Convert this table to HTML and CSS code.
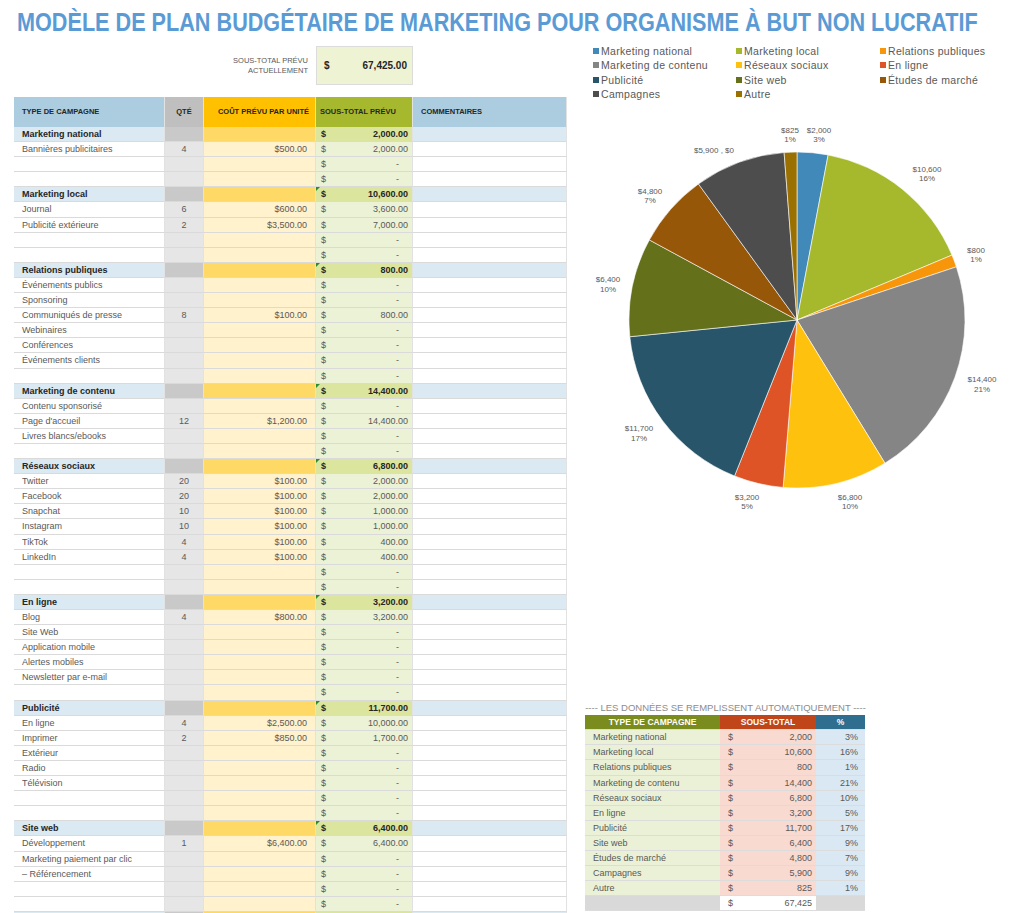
FILE: index.html
```html
<!DOCTYPE html>
<html lang="fr">
<head>
<meta charset="utf-8">
<title>Modèle de plan budgétaire de marketing</title>
<link rel="stylesheet" href="styles.css">
</head>
<body>
<h1 class="title"><span class="title-text">MODÈLE DE PLAN BUDGÉTAIRE DE MARKETING POUR ORGANISME À BUT NON LUCRATIF</span></h1>
<div class="main">
  <div class="left">
    <div class="total-block">
      <div class="total-label">SOUS-TOTAL PRÉVU<br>ACTUELLEMENT</div>
      <div class="total-box"><span>$</span><span>67,425.00</span></div>
    </div>
    <div class="budget">
      <div class="row head">
        <div class="c-type">TYPE DE CAMPAGNE</div>
        <div class="c-qty">QTÉ</div>
        <div class="c-cost">COÛT PRÉVU PAR UNITÉ</div>
        <div class="c-sub">SOUS-TOTAL PRÉVU</div>
        <div class="c-com">COMMENTAIRES</div>
      </div>

      <div class="row sec"><div class="c-type">Marketing national</div><div class="c-qty"></div><div class="c-cost"></div><div class="c-sub"><span>$</span><span>2,000.00</span></div><div class="c-com"></div></div>
      <div class="row item"><div class="c-type">Bannières publicitaires</div><div class="c-qty">4</div><div class="c-cost">$500.00</div><div class="c-sub"><span>$</span><span>2,000.00</span></div><div class="c-com"></div></div>
      <div class="row item"><div class="c-type"></div><div class="c-qty"></div><div class="c-cost"></div><div class="c-sub"><span>$</span><span class="dash">-</span></div><div class="c-com"></div></div>
      <div class="row item"><div class="c-type"></div><div class="c-qty"></div><div class="c-cost"></div><div class="c-sub"><span>$</span><span class="dash">-</span></div><div class="c-com"></div></div>

      <div class="row sec"><div class="c-type">Marketing local</div><div class="c-qty"></div><div class="c-cost"></div><div class="c-sub flag"><span>$</span><span>10,600.00</span></div><div class="c-com"></div></div>
      <div class="row item"><div class="c-type">Journal</div><div class="c-qty">6</div><div class="c-cost">$600.00</div><div class="c-sub"><span>$</span><span>3,600.00</span></div><div class="c-com"></div></div>
      <div class="row item"><div class="c-type">Publicité extérieure</div><div class="c-qty">2</div><div class="c-cost">$3,500.00</div><div class="c-sub"><span>$</span><span>7,000.00</span></div><div class="c-com"></div></div>
      <div class="row item"><div class="c-type"></div><div class="c-qty"></div><div class="c-cost"></div><div class="c-sub"><span>$</span><span class="dash">-</span></div><div class="c-com"></div></div>
      <div class="row item"><div class="c-type"></div><div class="c-qty"></div><div class="c-cost"></div><div class="c-sub"><span>$</span><span class="dash">-</span></div><div class="c-com"></div></div>

      <div class="row sec"><div class="c-type">Relations publiques</div><div class="c-qty"></div><div class="c-cost"></div><div class="c-sub flag"><span>$</span><span>800.00</span></div><div class="c-com"></div></div>
      <div class="row item"><div class="c-type">Événements publics</div><div class="c-qty"></div><div class="c-cost"></div><div class="c-sub"><span>$</span><span class="dash">-</span></div><div class="c-com"></div></div>
      <div class="row item"><div class="c-type">Sponsoring</div><div class="c-qty"></div><div class="c-cost"></div><div class="c-sub"><span>$</span><span class="dash">-</span></div><div class="c-com"></div></div>
      <div class="row item"><div class="c-type">Communiqués de presse</div><div class="c-qty">8</div><div class="c-cost">$100.00</div><div class="c-sub"><span>$</span><span>800.00</span></div><div class="c-com"></div></div>
      <div class="row item"><div class="c-type">Webinaires</div><div class="c-qty"></div><div class="c-cost"></div><div class="c-sub"><span>$</span><span class="dash">-</span></div><div class="c-com"></div></div>
      <div class="row item"><div class="c-type">Conférences</div><div class="c-qty"></div><div class="c-cost"></div><div class="c-sub"><span>$</span><span class="dash">-</span></div><div class="c-com"></div></div>
      <div class="row item"><div class="c-type">Événements clients</div><div class="c-qty"></div><div class="c-cost"></div><div class="c-sub"><span>$</span><span class="dash">-</span></div><div class="c-com"></div></div>
      <div class="row item"><div class="c-type"></div><div class="c-qty"></div><div class="c-cost"></div><div class="c-sub"><span>$</span><span class="dash">-</span></div><div class="c-com"></div></div>

      <div class="row sec"><div class="c-type">Marketing de contenu</div><div class="c-qty"></div><div class="c-cost"></div><div class="c-sub flag"><span>$</span><span>14,400.00</span></div><div class="c-com"></div></div>
      <div class="row item"><div class="c-type">Contenu sponsorisé</div><div class="c-qty"></div><div class="c-cost"></div><div class="c-sub"><span>$</span><span class="dash">-</span></div><div class="c-com"></div></div>
      <div class="row item"><div class="c-type">Page d'accueil</div><div class="c-qty">12</div><div class="c-cost">$1,200.00</div><div class="c-sub"><span>$</span><span>14,400.00</span></div><div class="c-com"></div></div>
      <div class="row item"><div class="c-type">Livres blancs/ebooks</div><div class="c-qty"></div><div class="c-cost"></div><div class="c-sub"><span>$</span><span class="dash">-</span></div><div class="c-com"></div></div>
      <div class="row item"><div class="c-type"></div><div class="c-qty"></div><div class="c-cost"></div><div class="c-sub"><span>$</span><span class="dash">-</span></div><div class="c-com"></div></div>

      <div class="row sec"><div class="c-type">Réseaux sociaux</div><div class="c-qty"></div><div class="c-cost"></div><div class="c-sub flag"><span>$</span><span>6,800.00</span></div><div class="c-com"></div></div>
      <div class="row item"><div class="c-type">Twitter</div><div class="c-qty">20</div><div class="c-cost">$100.00</div><div class="c-sub"><span>$</span><span>2,000.00</span></div><div class="c-com"></div></div>
      <div class="row item"><div class="c-type">Facebook</div><div class="c-qty">20</div><div class="c-cost">$100.00</div><div class="c-sub"><span>$</span><span>2,000.00</span></div><div class="c-com"></div></div>
      <div class="row item"><div class="c-type">Snapchat</div><div class="c-qty">10</div><div class="c-cost">$100.00</div><div class="c-sub"><span>$</span><span>1,000.00</span></div><div class="c-com"></div></div>
      <div class="row item"><div class="c-type">Instagram</div><div class="c-qty">10</div><div class="c-cost">$100.00</div><div class="c-sub"><span>$</span><span>1,000.00</span></div><div class="c-com"></div></div>
      <div class="row item"><div class="c-type">TikTok</div><div class="c-qty">4</div><div class="c-cost">$100.00</div><div class="c-sub"><span>$</span><span>400.00</span></div><div class="c-com"></div></div>
      <div class="row item"><div class="c-type">LinkedIn</div><div class="c-qty">4</div><div class="c-cost">$100.00</div><div class="c-sub"><span>$</span><span>400.00</span></div><div class="c-com"></div></div>
      <div class="row item"><div class="c-type"></div><div class="c-qty"></div><div class="c-cost"></div><div class="c-sub"><span>$</span><span class="dash">-</span></div><div class="c-com"></div></div>
      <div class="row item"><div class="c-type"></div><div class="c-qty"></div><div class="c-cost"></div><div class="c-sub"><span>$</span><span class="dash">-</span></div><div class="c-com"></div></div>

      <div class="row sec"><div class="c-type">En ligne</div><div class="c-qty"></div><div class="c-cost"></div><div class="c-sub flag"><span>$</span><span>3,200.00</span></div><div class="c-com"></div></div>
      <div class="row item"><div class="c-type">Blog</div><div class="c-qty">4</div><div class="c-cost">$800.00</div><div class="c-sub"><span>$</span><span>3,200.00</span></div><div class="c-com"></div></div>
      <div class="row item"><div class="c-type">Site Web</div><div class="c-qty"></div><div class="c-cost"></div><div class="c-sub"><span>$</span><span class="dash">-</span></div><div class="c-com"></div></div>
      <div class="row item"><div class="c-type">Application mobile</div><div class="c-qty"></div><div class="c-cost"></div><div class="c-sub"><span>$</span><span class="dash">-</span></div><div class="c-com"></div></div>
      <div class="row item"><div class="c-type">Alertes mobiles</div><div class="c-qty"></div><div class="c-cost"></div><div class="c-sub"><span>$</span><span class="dash">-</span></div><div class="c-com"></div></div>
      <div class="row item"><div class="c-type">Newsletter par e-mail</div><div class="c-qty"></div><div class="c-cost"></div><div class="c-sub"><span>$</span><span class="dash">-</span></div><div class="c-com"></div></div>
      <div class="row item"><div class="c-type"></div><div class="c-qty"></div><div class="c-cost"></div><div class="c-sub"><span>$</span><span class="dash">-</span></div><div class="c-com"></div></div>

      <div class="row sec"><div class="c-type">Publicité</div><div class="c-qty"></div><div class="c-cost"></div><div class="c-sub flag"><span>$</span><span>11,700.00</span></div><div class="c-com"></div></div>
      <div class="row item"><div class="c-type">En ligne</div><div class="c-qty">4</div><div class="c-cost">$2,500.00</div><div class="c-sub"><span>$</span><span>10,000.00</span></div><div class="c-com"></div></div>
      <div class="row item"><div class="c-type">Imprimer</div><div class="c-qty">2</div><div class="c-cost">$850.00</div><div class="c-sub"><span>$</span><span>1,700.00</span></div><div class="c-com"></div></div>
      <div class="row item"><div class="c-type">Extérieur</div><div class="c-qty"></div><div class="c-cost"></div><div class="c-sub"><span>$</span><span class="dash">-</span></div><div class="c-com"></div></div>
      <div class="row item"><div class="c-type">Radio</div><div class="c-qty"></div><div class="c-cost"></div><div class="c-sub"><span>$</span><span class="dash">-</span></div><div class="c-com"></div></div>
      <div class="row item"><div class="c-type">Télévision</div><div class="c-qty"></div><div class="c-cost"></div><div class="c-sub"><span>$</span><span class="dash">-</span></div><div class="c-com"></div></div>
      <div class="row item"><div class="c-type"></div><div class="c-qty"></div><div class="c-cost"></div><div class="c-sub"><span>$</span><span class="dash">-</span></div><div class="c-com"></div></div>
      <div class="row item"><div class="c-type"></div><div class="c-qty"></div><div class="c-cost"></div><div class="c-sub"><span>$</span><span class="dash">-</span></div><div class="c-com"></div></div>

      <div class="row sec"><div class="c-type">Site web</div><div class="c-qty"></div><div class="c-cost"></div><div class="c-sub flag"><span>$</span><span>6,400.00</span></div><div class="c-com"></div></div>
      <div class="row item"><div class="c-type">Développement</div><div class="c-qty">1</div><div class="c-cost">$6,400.00</div><div class="c-sub"><span>$</span><span>6,400.00</span></div><div class="c-com"></div></div>
      <div class="row item"><div class="c-type">Marketing paiement par clic</div><div class="c-qty"></div><div class="c-cost"></div><div class="c-sub"><span>$</span><span class="dash">-</span></div><div class="c-com"></div></div>
      <div class="row item"><div class="c-type">– Référencement</div><div class="c-qty"></div><div class="c-cost"></div><div class="c-sub"><span>$</span><span class="dash">-</span></div><div class="c-com"></div></div>
      <div class="row item"><div class="c-type"></div><div class="c-qty"></div><div class="c-cost"></div><div class="c-sub"><span>$</span><span class="dash">-</span></div><div class="c-com"></div></div>
      <div class="row item"><div class="c-type"></div><div class="c-qty"></div><div class="c-cost"></div><div class="c-sub"><span>$</span><span class="dash">-</span></div><div class="c-com"></div></div>
      <div class="row sec edge"><div class="c-type"></div><div class="c-qty"></div><div class="c-cost"></div><div class="c-sub"></div><div class="c-com"></div></div>
    </div>
  </div>

  <div class="right">
    <div class="legend">
      <div class="lg"><i class="sw s1"></i>Marketing national</div>
      <div class="lg"><i class="sw s2"></i>Marketing local</div>
      <div class="lg"><i class="sw s3"></i>Relations publiques</div>
      <div class="lg"><i class="sw s4"></i>Marketing de contenu</div>
      <div class="lg"><i class="sw s5"></i>Réseaux sociaux</div>
      <div class="lg"><i class="sw s6"></i>En ligne</div>
      <div class="lg"><i class="sw s7"></i>Publicité</div>
      <div class="lg"><i class="sw s8"></i>Site web</div>
      <div class="lg"><i class="sw s9"></i>Études de marché</div>
      <div class="lg"><i class="sw s10"></i>Campagnes</div>
      <div class="lg"><i class="sw s11"></i>Autre</div>
    </div>

    <svg class="pie" width="444" height="600" viewBox="0 0 444 600">
      <g transform="translate(217,219)" stroke="#ffffff" stroke-width="0.6">
        <path fill="#4189b9" d="M0 0 L0 -168 A168 168 0 0 1 31.13 -165.09 Z"/>
        <path fill="#a6b82c" d="M0 0 L31.13 -165.09 A168 168 0 0 1 154.96 -64.90 Z"/>
        <path fill="#f7960a" d="M0 0 L154.96 -64.90 A168 168 0 0 1 159.36 -53.18 Z"/>
        <path fill="#858585" d="M0 0 L159.36 -53.18 A168 168 0 0 1 87.95 143.14 Z"/>
        <path fill="#fec10e" d="M0 0 L87.95 143.14 A168 168 0 0 1 -13.88 167.43 Z"/>
        <path fill="#df5426" d="M0 0 L-13.88 167.43 A168 168 0 0 1 -62.47 155.95 Z"/>
        <path fill="#285569" d="M0 0 L-62.47 155.95 A168 168 0 0 1 -167.17 16.72 Z"/>
        <path fill="#64701a" d="M0 0 L-167.17 16.72 A168 168 0 0 1 -147.68 -80.09 Z"/>
        <path fill="#965708" d="M0 0 L-147.68 -80.09 A168 168 0 0 1 -98.54 -136.07 Z"/>
        <path fill="#4d4d4d" d="M0 0 L-98.54 -136.07 A168 168 0 0 1 -12.89 -167.50 Z"/>
        <path fill="#9a7000" d="M0 0 L-12.89 -167.50 A168 168 0 0 1 0 -168 Z"/>
      </g>
      <g class="plabel" text-anchor="middle">
        <text x="210" y="32">$825</text><text x="210" y="41">1%</text>
        <text x="239" y="32">$2,000</text><text x="239" y="41">3%</text>
        <text x="347" y="71">$10,600</text><text x="347" y="80">16%</text>
        <text x="396" y="152">$800</text><text x="396" y="161">1%</text>
        <text x="402" y="281">$14,400</text><text x="402" y="291">21%</text>
        <text x="270" y="399">$6,800</text><text x="270" y="408">10%</text>
        <text x="167" y="399">$3,200</text><text x="167" y="408">5%</text>
        <text x="59" y="330">$11,700</text><text x="59" y="340">17%</text>
        <text x="28" y="181">$6,400</text><text x="28" y="191">10%</text>
        <text x="70" y="93">$4,800</text><text x="70" y="102">7%</text>
        <text x="134" y="52">$5,900 , $0</text>
      </g>
    </svg>

    <div class="summary">
      <div class="caption">---- LES DONNÉES SE REMPLISSENT AUTOMATIQUEMENT ----</div>
      <div class="srow shead"><div class="s-type">TYPE DE CAMPAGNE</div><div class="s-sub">SOUS-TOTAL</div><div class="s-pct">%</div></div>
      <div class="srow"><div class="s-type">Marketing national</div><div class="s-sub"><span>$</span><span>2,000</span></div><div class="s-pct">3%</div></div>
      <div class="srow"><div class="s-type">Marketing local</div><div class="s-sub"><span>$</span><span>10,600</span></div><div class="s-pct">16%</div></div>
      <div class="srow"><div class="s-type">Relations publiques</div><div class="s-sub"><span>$</span><span>800</span></div><div class="s-pct">1%</div></div>
      <div class="srow"><div class="s-type">Marketing de contenu</div><div class="s-sub"><span>$</span><span>14,400</span></div><div class="s-pct">21%</div></div>
      <div class="srow"><div class="s-type">Réseaux sociaux</div><div class="s-sub"><span>$</span><span>6,800</span></div><div class="s-pct">10%</div></div>
      <div class="srow"><div class="s-type">En ligne</div><div class="s-sub"><span>$</span><span>3,200</span></div><div class="s-pct">5%</div></div>
      <div class="srow"><div class="s-type">Publicité</div><div class="s-sub"><span>$</span><span>11,700</span></div><div class="s-pct">17%</div></div>
      <div class="srow"><div class="s-type">Site web</div><div class="s-sub"><span>$</span><span>6,400</span></div><div class="s-pct">9%</div></div>
      <div class="srow"><div class="s-type">Études de marché</div><div class="s-sub"><span>$</span><span>4,800</span></div><div class="s-pct">7%</div></div>
      <div class="srow"><div class="s-type">Campagnes</div><div class="s-sub"><span>$</span><span>5,900</span></div><div class="s-pct">9%</div></div>
      <div class="srow"><div class="s-type">Autre</div><div class="s-sub"><span>$</span><span>825</span></div><div class="s-pct">1%</div></div>
      <div class="srow stotal"><div class="s-type"></div><div class="s-sub"><span>$</span><span>67,425</span></div><div class="s-pct"></div></div>
    </div>
  </div>
</div>
</body>
</html>
```

FILE: styles.css
```css
* { box-sizing: border-box; }

html, body {
  margin: 0;
  padding: 0;
  background: #ffffff;
  width: 1024px;
  height: 913px;
  overflow: hidden;
  font-family: "Liberation Sans", Arial, sans-serif;
  color: #595959;
}

.title {
  margin: 0;
  height: 43px;
  padding-left: 17px;
  padding-top: 8px;
  font-family: "Liberation Sans", Arial, sans-serif;
  font-weight: bold;
  font-size: 26px;
  line-height: 28px;
  color: #5b9bd5;
  white-space: nowrap;
  overflow: hidden;
}

.title-text {
  display: inline-block;
  transform: scaleX(0.832);
  transform-origin: 0 50%;
}

.main {
  display: flex;
}

.left {
  width: 580px;
  padding-left: 14px;
}

.total-block {
  display: grid;
  grid-template-columns: 302px 97px;
  margin-top: 3px;
  height: 39px;
}

.total-label {
  align-self: center;
  text-align: right;
  padding-right: 8px;
  font-size: 7.5px;
  line-height: 10px;
  color: #595959;
}

.total-box {
  display: flex;
  justify-content: space-between;
  align-items: center;
  padding: 0 5px 0 7px;
  background: #eef3d3;
  border: 1px solid #dcdcdc;
  font-weight: bold;
  font-size: 10px;
  color: #262626;
}

.budget {
  margin-top: 12px;
}

.row {
  display: grid;
  grid-template-columns: 151px 39px 112px 97px 154px;
  height: 15.1px;
  font-size: 9px;
  line-height: 14px;
}

.row > div {
  border-bottom: 1px solid #dadada;
  border-right: 1px solid #e2e2e2;
  white-space: nowrap;
  overflow: hidden;
}

.row.head {
  height: 30px;
  font-weight: bold;
  font-size: 7.5px;
  color: #262626;
}

.row.head > div {
  line-height: 30px;
  border-bottom: none;
}

.row.head .c-type { background: #acccdf; padding-left: 8px; }
.row.head .c-qty { background: #bfbfbf; text-align: center; }
.row.head .c-cost { background: #ffc000; text-align: right; padding-right: 6px; }
.row.head .c-sub { background: #a6b82e; padding-left: 4px; display: block; }
.row.head .c-com { background: #acccdf; padding-left: 8px; }

.c-type { padding-left: 8px; }
.c-qty { text-align: center; }
.c-cost { text-align: right; padding-right: 8px; }
.c-sub {
  display: flex;
  justify-content: space-between;
  padding: 0 4px 0 5px;
  position: relative;
}
.c-sub .dash { padding-right: 9px; }

.row.sec { color: #262626; font-weight: bold; }
.row.sec .c-type { background: #dae9f2; }
.row.sec .c-qty { background: #c9c9c9; }
.row.sec .c-cost { background: #ffd966; }
.row.sec .c-sub { background: #dbe59e; }
.row.sec .c-com { background: #dae9f2; }

.row.item .c-type { background: #ffffff; }
.row.item .c-qty { background: #e6e6e6; }
.row.item .c-cost { background: #fff2cc; }
.row.item .c-sub { background: #ecf2d6; }
.row.item .c-com { background: #ffffff; }

.c-sub.flag::before {
  content: "";
  position: absolute;
  left: 0;
  top: 0;
  border-top: 4px solid #2e8b2e;
  border-right: 4px solid transparent;
}

.right {
  width: 444px;
}

.legend {
  display: grid;
  grid-template-columns: 143px 144px 150px;
  grid-auto-rows: 14.3px;
  padding-left: 13px;
  margin-top: 1px;
  font-size: 10.5px;
  letter-spacing: 0.3px;
  line-height: 14.3px;
  color: #595959;
}

.lg {
  display: flex;
  align-items: center;
  white-space: nowrap;
}

.sw {
  display: inline-block;
  width: 6px;
  height: 6px;
  margin-right: 2px;
}
.s1 { background: #4189b9; }
.s2 { background: #a6b82c; }
.s3 { background: #f7960a; }
.s4 { background: #858585; }
.s5 { background: #fec10e; }
.s6 { background: #df5426; }
.s7 { background: #285569; }
.s8 { background: #64701a; }
.s9 { background: #965708; }
.s10 { background: #4d4d4d; }
.s11 { background: #9a7000; }

.pie {
  display: block;
}

.plabel {
  font-family: "Liberation Sans", Arial, sans-serif;
  font-size: 8px;
  fill: #595959;
}

.summary {
  width: 286px;
  padding-left: 5px;
}

.caption {
  height: 14px;
  font-size: 9.5px;
  line-height: 14px;
  color: #8c8c8c;
  white-space: nowrap;
  text-align: center;
}

.srow {
  display: grid;
  grid-template-columns: 135px 96px 49px;
  height: 15.1px;
  font-size: 9px;
  line-height: 14px;
  color: #595959;
}

.srow > div {
  border-bottom: 1px solid #dcdcdc;
  white-space: nowrap;
}

.s-type { background: #ebf1d6; padding-left: 8px; }
.s-sub {
  background: #f8dad1;
  display: flex;
  justify-content: space-between;
  padding: 0 4px 0 8px;
}
.s-pct { background: #d9e8f3; text-align: right; padding-right: 7px; }

.srow.shead {
  font-weight: bold;
  font-size: 8.5px;
  color: #ffffff;
}
.srow.shead .s-type { background: #7b8c1e; text-align: center; padding-left: 0; }
.srow.shead .s-sub { background: #c0461a; justify-content: center; padding: 0; }
.srow.shead .s-pct { background: #2f6e8f; text-align: center; padding-right: 0; }

.srow.stotal .s-type { background: #d9d9d9; }
.srow.stotal .s-sub { background: #ffffff; }
.srow.stotal .s-pct { background: #d9d9d9; }
```
